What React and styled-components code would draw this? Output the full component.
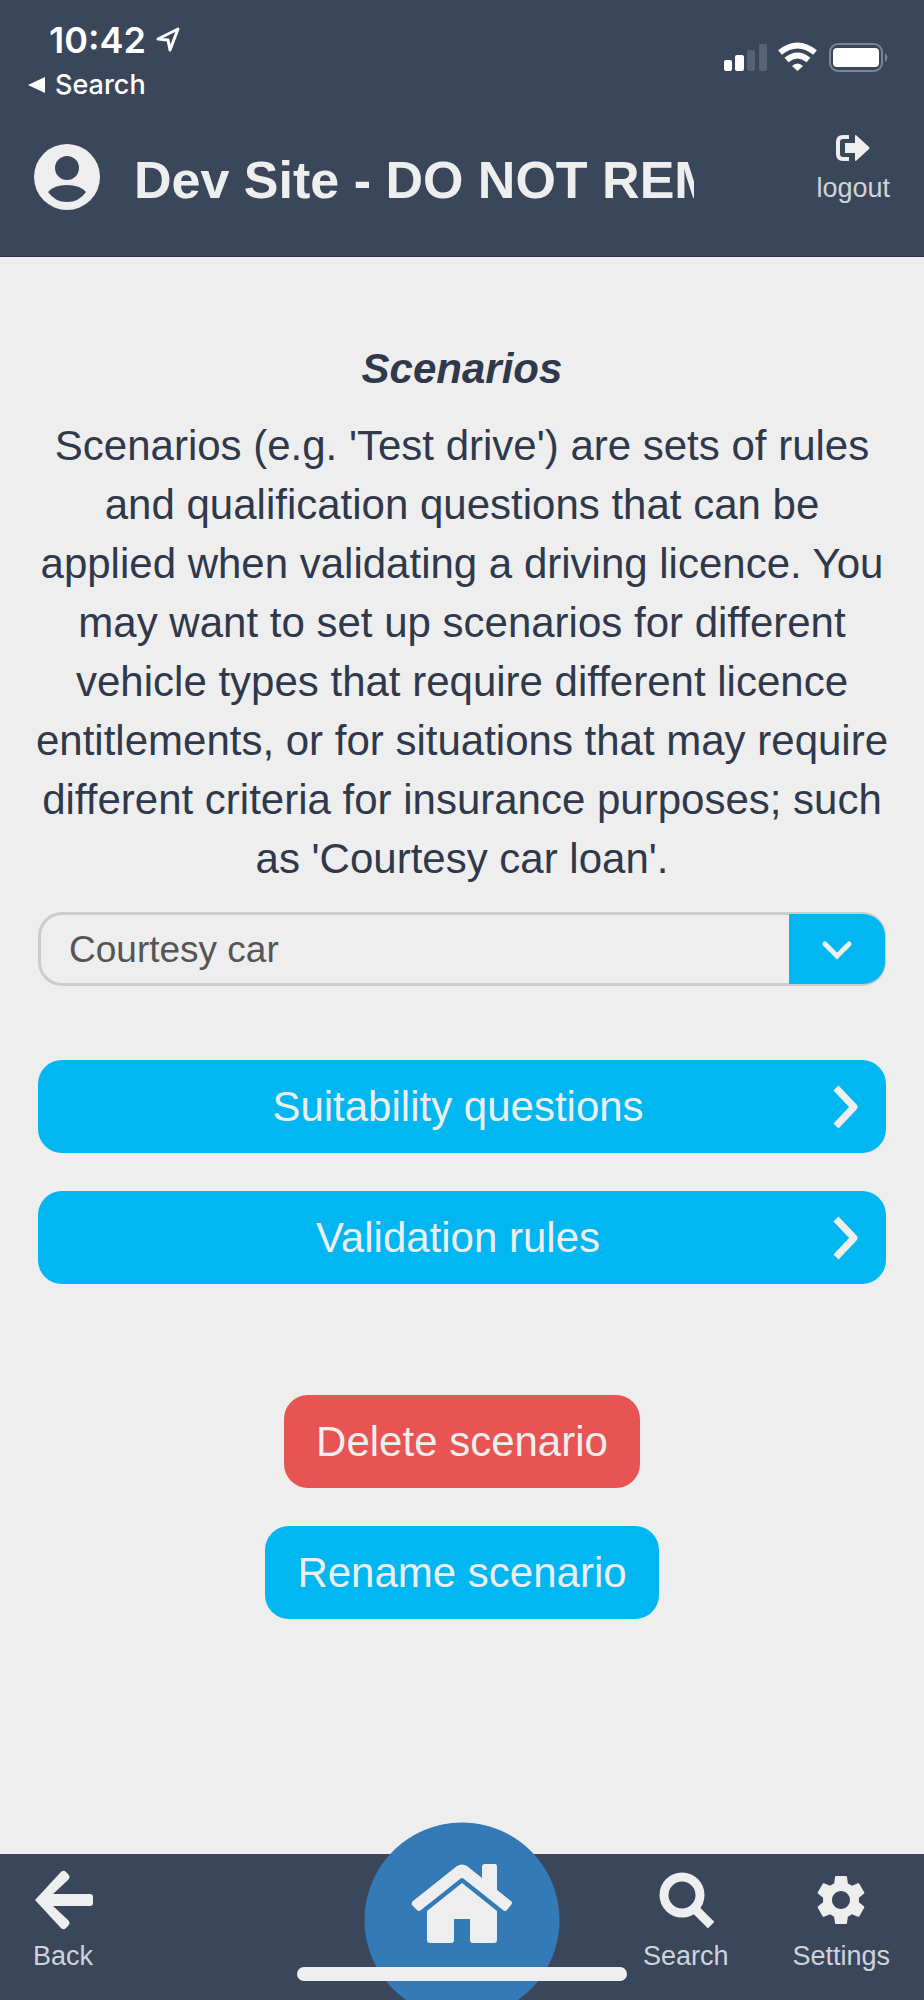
import React from "react";

import styled, { createGlobalStyle } from "styled-components";

import { MdSettings } from "react-icons/md";

const scenarios = ["Courtesy car"];

const App = () => {
    const [scenario, setScenario] = React.useState(scenarios[0]);

    return (
        <Page>
            <GlobalStyle />

            <Header>
                <StatusBar>
                    <div>
                        <Clock>
                            10:42
                            <LocationIcon />
                        </Clock>
                        <ReturnLink href="#search">
                            <TriangleIcon />
                            Search
                        </ReturnLink>
                    </div>
                    <StatusIcons />
                </StatusBar>

                <TitleRow>
                    <UserIcon />
                    <SiteTitle>Dev Site - DO NOT REM</SiteTitle>
                    <LogoutButton type="button">
                        <LogoutIcon />
                        logout
                    </LogoutButton>
                </TitleRow>
            </Header>

            <Content>
                <Heading>Scenarios</Heading>
                <Intro>
                    Scenarios (e.g. 'Test drive') are sets of rules and
                    qualification questions that can be applied when validating
                    a driving licence. You may want to set up scenarios for
                    different vehicle types that require different licence
                    entitlements, or for situations that may require different
                    criteria for insurance purposes; such as 'Courtesy car
                    loan'.
                </Intro>

                <SelectWrapper>
                    <Select
                        name="scenario"
                        aria-label="Scenarios"
                        value={scenario}
                        onChange={(ev) => setScenario(ev.target.value)}
                    >
                        {scenarios.map((x) => (
                            <option key={x}>{x}</option>
                        ))}
                    </Select>
                    <SelectArrow>
                        <ChevronDown />
                    </SelectArrow>
                </SelectWrapper>

                <ButtonList>
                    <WideButton type="button">
                        Suitability questions
                        <ChevronRight />
                    </WideButton>
                    <WideButton type="button">
                        Validation rules
                        <ChevronRight />
                    </WideButton>
                </ButtonList>

                <ActionList>
                    <Button type="button" $danger>
                        Delete scenario
                    </Button>
                    <Button type="button">Rename scenario</Button>
                </ActionList>
            </Content>

            <Footer>
                <NavLink href="#back">
                    <BackIcon />
                    Back
                </NavLink>
                <NavGroup>
                    <NavLink href="#find">
                        <SearchIcon />
                        Search
                    </NavLink>
                    <NavLink href="#settings">
                        <GearIcon />
                        Settings
                    </NavLink>
                </NavGroup>
                <HomeLink href="#home" aria-label="Home">
                    <HomeIcon />
                </HomeLink>
                <HomeIndicator />
            </Footer>
        </Page>
    );
};

export default App;

/* Icons */

const LocationIcon = () => (
    <svg width="28" height="28" viewBox="0 0 28 28" fill="none">
        <path
            d="M4 13 L24 3 L16 24 L14 14 Z"
            stroke="#fff"
            strokeWidth="3"
            strokeLinejoin="round"
        />
    </svg>
);

const TriangleIcon = () => (
    <svg width="20" height="20" viewBox="0 0 20 20">
        <path d="M1 10 L18 2 V18 Z" fill="#fff" />
    </svg>
);

const StatusIcons = () => (
    <svg width="168" height="32" viewBox="0 0 168 32" fill="none">
        <rect x="2" y="20" width="8" height="11" rx="2" fill="#fff" />
        <rect x="13" y="15" width="9" height="16" rx="2" fill="#fff" />
        <rect x="25" y="10" width="8" height="21" rx="2" fill="#566375" />
        <rect x="37" y="4" width="8" height="27" rx="2" fill="#566375" />
        <path d="M58 12.5 Q75.5 -1.5 93 12.5" stroke="#fff" strokeWidth="6" />
        <path d="M64.5 20 Q75.5 11 86.5 20" stroke="#fff" strokeWidth="6" />
        <path d="M70 26 Q75.5 21 81 26 L75.5 31 Z" fill="#fff" />
        <rect
            x="108"
            y="4"
            width="52"
            height="27"
            rx="8"
            stroke="#7b8594"
            strokeWidth="2"
        />
        <rect x="111" y="8" width="46" height="19" rx="4" fill="#fff" />
        <path d="M163 13 Q168 17 163 22 Z" fill="#7b8594" />
    </svg>
);

const UserIcon = () => (
    <svg width="66" height="66" viewBox="0 0 66 66">
        <circle cx="33" cy="33" r="33" fill="#eee" />
        <circle cx="33" cy="24" r="12" fill="#3a475b" />
        <path
            d="M14 48 Q20 41 33 41 Q46 41 52 48 Q45 58 33 58 Q21 58 14 48 Z"
            fill="#3a475b"
        />
    </svg>
);

const LogoutIcon = () => (
    <svg width="36" height="28" viewBox="0 0 36 28">
        <path
            d="M14 3 H8 Q3 3 3 8 V20 Q3 25 8 25 H14"
            fill="none"
            stroke="#eee"
            strokeWidth="4"
        />
        <path
            d="M10 9 H20 V2 Q20 0 22 2 L34 13 Q35 14 34 15 L22 26 Q20 28 20 26 V19 H10 Z"
            fill="#eee"
        />
    </svg>
);

const ChevronDown = () => (
    <svg width="32" height="22" viewBox="0 0 32 22" fill="none">
        <path
            d="M4 6 L16 18 L28 6"
            stroke="#eee"
            strokeWidth="5"
            strokeLinecap="round"
        />
    </svg>
);

const ChevronRight = () => (
    <svg width="28" height="46" viewBox="0 0 28 46" fill="none">
        <path
            d="M4 4 L22 23 L4 42"
            stroke="#eee"
            strokeWidth="7"
            strokeLinejoin="round"
        />
    </svg>
);

const BackIcon = () => (
    <svg width="60" height="60" viewBox="0 0 60 60">
        <path
            d="M2 30 L27 3 Q30 -1 33 2 L35 4 Q38 7 35 10 L20 24 H57 Q60 24 60 27 V33 Q60 36 57 36 H20 L35 50 Q38 53 35 56 L33 58 Q30 61 27 57 Z"
            fill="#eee"
        />
    </svg>
);

const SearchIcon = () => (
    <svg width="60" height="60" viewBox="0 0 60 60" fill="none">
        <circle cx="26" cy="25" r="18" stroke="#eee" strokeWidth="9" />
        <path d="M38 38 L55 55" stroke="#eee" strokeWidth="9" />
        <path d="M51 57 L57 51" stroke="#eee" strokeWidth="3" />
    </svg>
);

const GearIcon = () => <MdSettings size={64} color="#eee" />;

const HomeIcon = () => (
    <svg width="102" height="80" viewBox="0 0 102 80" fill="#eee">
        <path d="M1 41 Q0 39 2 37 L46 2 Q51 -1 56 2 L71 14 V3 Q71 0 74 0 H84 Q86 0 86 3 V26 L100 37 Q102 39 100 41 L96 46 Q94 48 92 46 L53 15 Q51 13 49 15 L10 46 Q8 48 6 46 Z" />
        <path d="M51 19 L86 47 V76 Q86 79 83 79 H62 Q59 79 59 76 V55 H43 V76 Q43 79 40 79 H19 Q16 79 16 76 V47 Z" />
    </svg>
);

/* Styles */

const GlobalStyle = createGlobalStyle`
    * {
        box-sizing: border-box;
    }

    body {
        margin: 0;
        background: #eee;
        font-family: "Liberation Sans", Arial, sans-serif;
    }

    svg {
        display: block;
        flex-shrink: 0;
    }
`;

const Page = styled.div`
    display: flex;
    flex-direction: column;
    min-height: 100vh;
    color: #2f394b;
`;

const Header = styled.header`
    padding: 20px 34px 40px;
    background: #3a475b;
    border-bottom: 1px solid #2b3648;
`;

const StatusBar = styled.div`
    display: flex;
    justify-content: space-between;
    align-items: center;
    color: #fff;
    font-family: Inter, sans-serif;

    > svg {
        margin-bottom: 14px;
    }
`;

const Clock = styled.div`
    display: flex;
    align-items: center;
    gap: 8px;
    padding-left: 15px;
    font-size: 36px;
    line-height: 40px;
    font-weight: 600;
`;

const ReturnLink = styled.a`
    display: flex;
    align-items: center;
    gap: 8px;
    margin-left: -7px;
    padding-top: 5px;
    color: #fff;
    font-size: 27px;
    line-height: 40px;
    font-weight: 500;
    text-decoration: none;
`;

const TitleRow = styled.div`
    display: flex;
    align-items: flex-end;
    height: 111px;

    > svg {
        margin-bottom: 6px;
    }
`;

const SiteTitle = styled.h1`
    flex: 0 1 560px;
    margin: 0 auto 0 34px;
    overflow: hidden;
    color: #eee;
    font-size: 52px;
    line-height: 72px;
    white-space: nowrap;
`;

const LogoutButton = styled.button`
    display: flex;
    flex-direction: column;
    align-items: center;
    gap: 10px;
    padding: 0 0 12px;
    border: 0;
    background: none;
    color: #cfd4dc;
    font-family: inherit;
    font-size: 27px;
    line-height: 32px;
`;

const Content = styled.main`
    flex: 1;
    padding: 82px 38px;
`;

const Heading = styled.h2`
    margin: 0 0 17px;
    font-size: 42px;
    line-height: 60px;
    font-style: italic;
    text-align: center;
`;

const Intro = styled.p`
    margin: 0 -4px 24px;
    font-size: 42px;
    line-height: 59px;
    text-align: center;
`;

const SelectWrapper = styled.div`
    position: relative;
    height: 74px;
`;

const Select = styled.select`
    width: 100%;
    height: 100%;
    padding: 0 120px 0 28px;
    border: 3px solid #ccc;
    border-radius: 24px;
    background: #eee;
    color: #555;
    font-family: inherit;
    font-size: 37px;
    appearance: none;
`;

const SelectArrow = styled.span`
    position: absolute;
    top: 2px;
    right: 1px;
    bottom: 2px;
    display: flex;
    align-items: center;
    justify-content: center;
    width: 96px;
    border-radius: 0 22px 22px 0;
    background: #01b7f1;
    pointer-events: none;
`;

const ButtonList = styled.div`
    display: grid;
    gap: 38px;
    padding-top: 74px;
`;

const ActionList = styled.div`
    display: flex;
    flex-direction: column;
    align-items: center;
    gap: 38px;
    padding-top: 111px;
`;

const Button = styled.button`
    height: 93px;
    padding: 0 32px;
    border: 0;
    border-radius: 24px;
    background: ${(props) => (props.$danger ? "#e85454" : "#01b7f1")};
    color: #eee;
    font-family: inherit;
    font-size: 42px;
`;

const WideButton = styled(Button)`
    position: relative;
    padding-right: 40px;

    svg {
        position: absolute;
        top: 24px;
        right: 26px;
    }
`;

const Footer = styled.footer`
    position: relative;
    display: flex;
    justify-content: space-between;
    height: 146px;
    padding: 16px 34px 0 33px;
    background: #3a475b;
`;

const NavGroup = styled.div`
    display: flex;
    gap: 64px;
`;

const NavLink = styled.a`
    display: flex;
    flex-direction: column;
    align-items: center;
    color: #cfd4dc;
    font-size: 27px;
    line-height: 32px;
    text-decoration: none;

    svg {
        height: 60px;
        margin-bottom: 10px;
    }
`;

const HomeLink = styled.a`
    position: absolute;
    top: -32px;
    left: 50%;
    display: flex;
    justify-content: center;
    width: 196px;
    height: 178px;
    padding-top: 42px;
    margin-left: -98px;
    border-radius: 98px 98px 0 0;
    background: radial-gradient(circle at 98px 98px, #337ab7 97px, transparent 98px);
`;

const HomeIndicator = styled.div`
    position: absolute;
    bottom: 19px;
    left: 50%;
    width: 330px;
    height: 14px;
    margin-left: -165px;
    border-radius: 7px;
    background: #eee;
`;
